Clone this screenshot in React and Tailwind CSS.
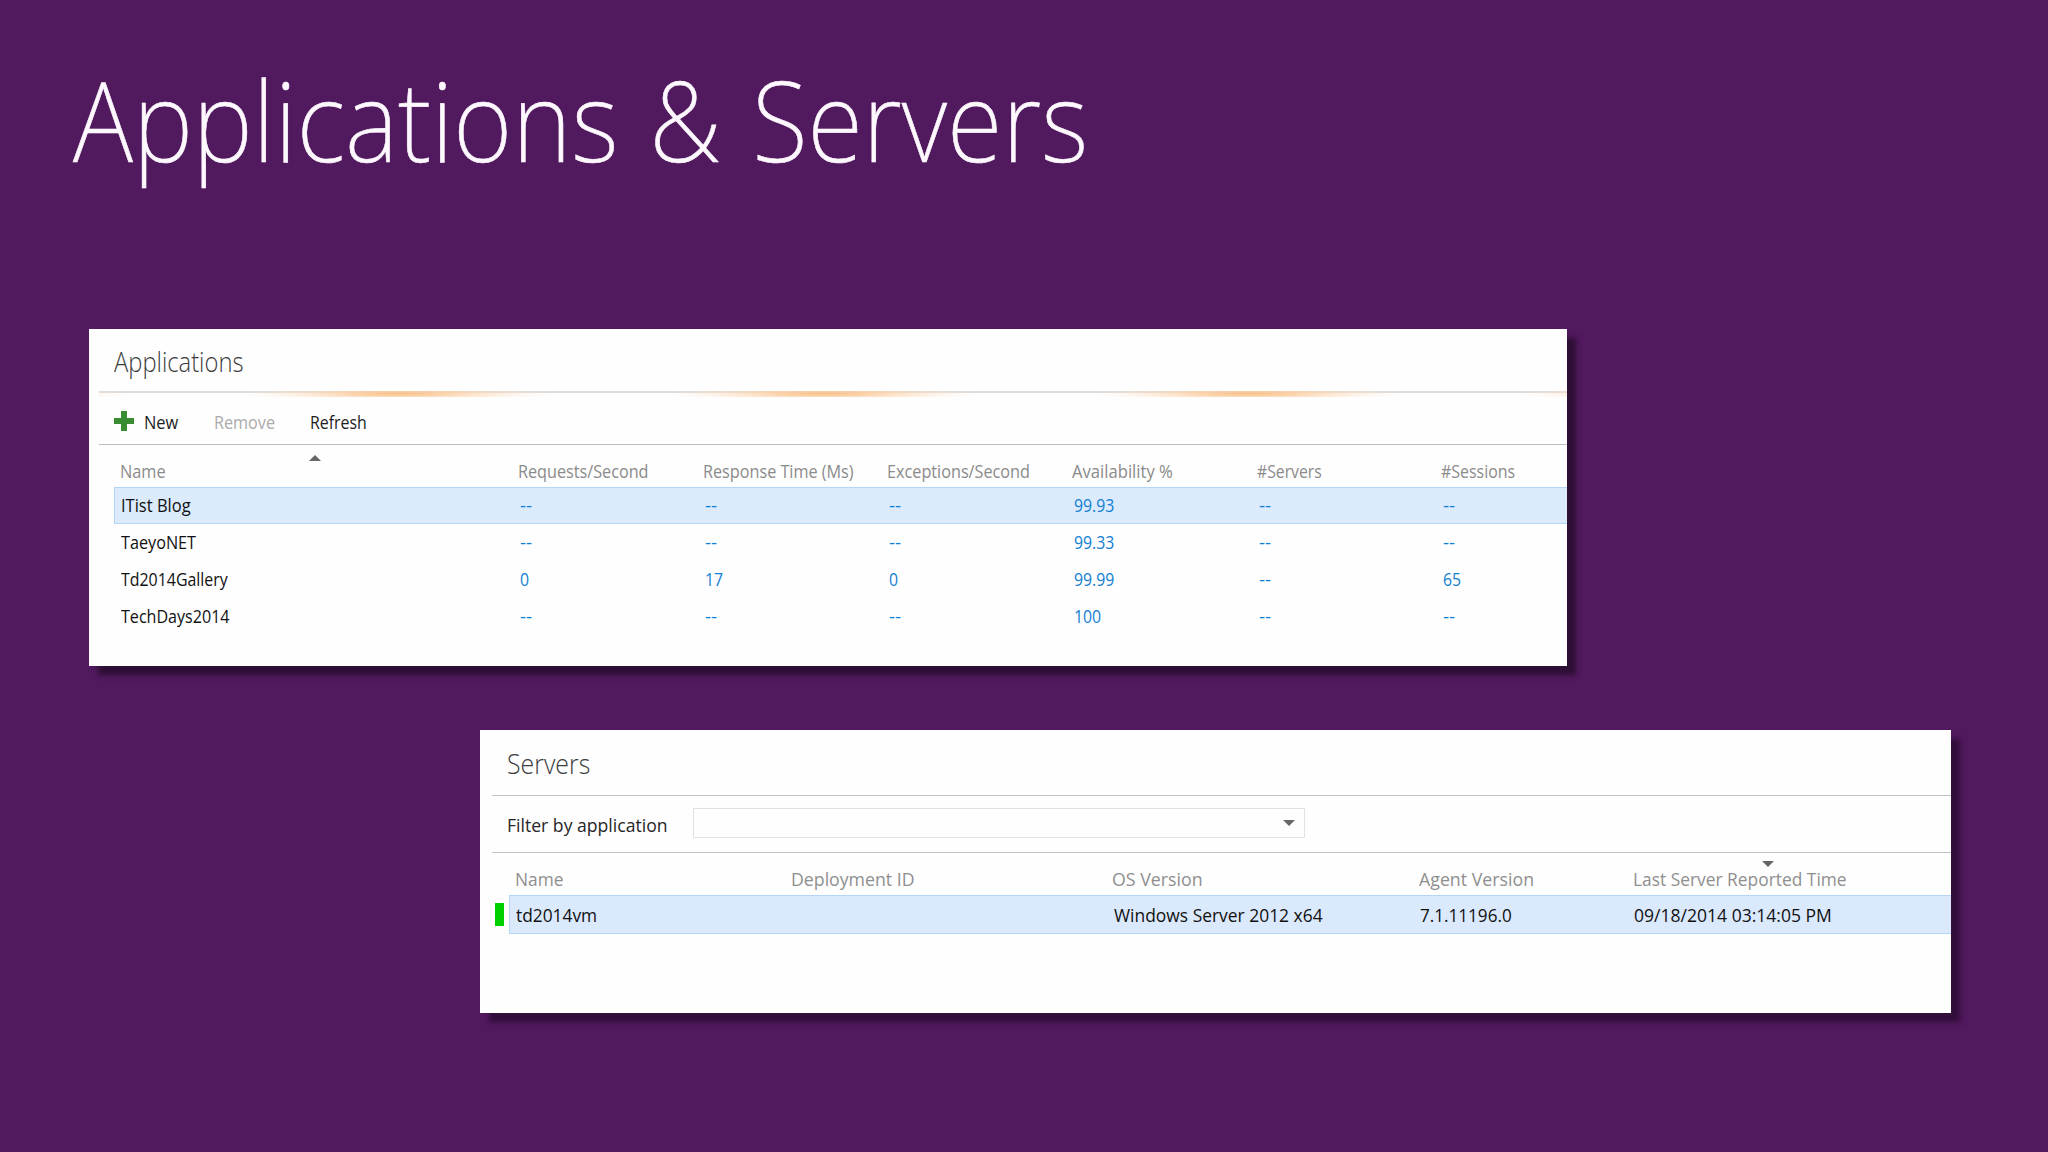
import React from 'react';

const appColumns = [
  { title: 'Name', fit: 'scale-x-[0.905]' },
  { title: 'Requests/Second', fit: 'scale-x-[0.9]' },
  { title: 'Response Time (Ms)', fit: 'scale-x-[0.9]' },
  { title: 'Exceptions/Second', fit: 'scale-x-[0.901]' },
  { title: 'Availability %', fit: 'scale-x-[0.924]' },
  { title: '#Servers', fit: 'scale-x-[0.875]' },
  { title: '#Sessions', fit: 'scale-x-[0.885]' },
];

const applications = [
  { name: 'ITist Blog', fit: 'scale-x-[0.917]', values: ['--', '--', '--', '99.93', '--', '--'], selected: true },
  { name: 'TaeyoNET', fit: 'scale-x-[0.9]', values: ['--', '--', '--', '99.33', '--', '--'] },
  { name: 'Td2014Gallery', fit: 'scale-x-[0.884]', values: ['0', '17', '0', '99.99', '--', '65'] },
  { name: 'TechDays2014', fit: 'scale-x-[0.893]', values: ['--', '--', '--', '100', '--', '--'] },
];

const serverColumns = [
  { title: 'Name', value: 'td2014vm', fit: 'scale-x-[0.913]', valueFit: 'scale-x-[0.912]' },
  { title: 'Deployment ID', value: '', fit: 'scale-x-[0.932]', valueFit: '' },
  { title: 'OS Version', value: 'Windows Server 2012 x64', fit: 'scale-x-[0.935]', valueFit: 'scale-x-[0.917]' },
  { title: 'Agent Version', value: '7.1.11196.0', fit: 'scale-x-[0.935]', valueFit: 'scale-x-[0.9]' },
  { title: 'Last Server Reported Time', value: '09/18/2014 03:14:05 PM', fit: 'scale-x-[0.914]', valueFit: 'scale-x-[0.923]' },
];

const Label = ({ fit = 'scale-x-[0.9]', className = '', children }) => (
  <span className={`inline-block origin-left whitespace-nowrap ${fit} ${className}`}>{children}</span>
);

const Triangle = ({ down, className = '' }) => (
  <svg width="12" height="6" viewBox="0 0 12 6" className={className}>
    <path d={down ? 'M0 0H12L6 6Z' : 'M0 6H12L6 0Z'} fill="#666666" />
  </svg>
);

// Loading strip under the applications title: repeating orange glows
const GlowStrip = () => (
  <svg width="1468" height="6" viewBox="0 0 1468 6" className="block">
    <defs>
      <radialGradient id="glow">
        <stop offset="0" stopColor="#f8c08a" />
        <stop offset="0.3" stopColor="#fbcfa4" stopOpacity="0.9" />
        <stop offset="1" stopColor="#fde6d0" stopOpacity="0" />
      </radialGradient>
    </defs>
    <rect width="1468" height="2" fill="#dedddd" />
    {[-126, 299, 724, 1150, 1576].map(cx => (
      <ellipse key={cx} cx={cx} cy="2.5" rx="155" ry="9" fill="url(#glow)" />
    ))}
  </svg>
);

const ApplicationsPanel = () => (
  <section className="ml-[89px] w-[1478px] h-[337px] bg-[#fefefe] pl-[10px] shadow-[9px_9px_5px_#2d0f35] text-[18px] leading-6">
    <header className="flex h-[62px] items-center pl-[15px] pt-[3px]">
      <h2 className="text-[27px] leading-8 font-light text-[#3c3c3c]">
        <Label fit="scale-x-[0.88]">Applications</Label>
      </h2>
    </header>
    <GlowStrip />
    <div className="flex h-[47px] items-center pl-[15px] pt-[2px] text-[#1c1c1c]">
      <svg width="20" height="20" viewBox="0 0 20 20" className="mb-px">
        <path d="M7 0H13V7H20V13H13V20H7V13H0V7H7Z" fill="#388d33" />
      </svg>
      <div className="ml-[10px] w-[70px]"><Label fit="scale-x-[0.912]">New</Label></div>
      <div className="w-[96px] text-[#ababab]"><Label>Remove</Label></div>
      <Label fit="scale-x-[0.883]">Refresh</Label>
    </div>
    <div className="h-px bg-[#bdbdbd]" />
    <div className="relative flex h-[42px] items-end pb-[4px] pl-[21px] text-[#8b8b8b]">
      <Triangle className="absolute left-[210px] top-[10px]" />
      <div className="grid grid-cols-[398px_repeat(6,184.7px)]">
        {appColumns.map(col => <Label key={col.title} fit={col.fit}>{col.title}</Label>)}
      </div>
    </div>
    <div className="ml-[15px]">
      {applications.map(app => (
        <div
          key={app.name}
          className={`flex h-[37px] items-center overflow-hidden border border-r-0 pb-px pl-[6px] ${app.selected ? 'border-[#b4d5f5] bg-[#dbebfc]' : 'border-transparent'}`}
        >
          <div className="grid grid-cols-[399px_repeat(6,184.7px)] text-[#1280d2]">
            <Label fit={app.fit} className="text-[#111111]">{app.name}</Label>
            {app.values.map((value, i) => (
              <Label key={i} fit={value === '--' ? 'scale-x-105' : 'scale-x-[0.88]'} className="font-medium">{value}</Label>
            ))}
          </div>
        </div>
      ))}
    </div>
  </section>
);

const ServersPanel = () => (
  <section className="ml-[480px] mt-16 w-[1471px] h-[283px] bg-[#fefefe] pl-3 shadow-[9px_9px_5px_#320e3b] text-[19px] leading-[26px]">
    <header className="flex h-[65px] items-center pl-[15px]">
      <h2 className="text-[28px] leading-8 font-light text-[#3c3c3c]">
        <Label fit="scale-x-[0.888]">Servers</Label>
      </h2>
    </header>
    <div className="h-px bg-[#c2c2c6]" />
    <div className="flex h-14 items-center pl-[15px] text-[#262626]">
      <div className="w-[186px] pt-[2px]"><Label fit="scale-x-[0.926]">Filter by application</Label></div>
      <div className="mb-[2px] flex h-[30px] w-[612px] items-center justify-end border border-[#e2e2e4] pr-[9px]">
        <Triangle down />
      </div>
    </div>
    <div className="h-px bg-[#c2c2c6]" />
    <div className="relative flex h-[42px] items-end pb-[3px] pl-[23px] text-[#8f8f8f]">
      <Triangle down className="absolute left-[1270px] top-[8px]" />
      <div className="grid grid-cols-[276px_321px_307px_214px_300px]">
        {serverColumns.map(col => <Label key={col.title} fit={col.fit}>{col.title}</Label>)}
      </div>
    </div>
    <div className="flex items-center">
      <div className="ml-[3px] mr-[5px] h-[23px] w-[9px] bg-[#00d000]" />
      <div className="flex h-[39px] flex-1 items-center border border-r-0 border-[#b4d5f5] bg-[#dbe9fd] pl-[6px] text-[#111111]">
        <div className="grid grid-cols-[276px_322px_306px_214px_300px]">
          {serverColumns.map(col => <Label key={col.title} fit={col.valueFit}>{col.value}</Label>)}
        </div>
      </div>
    </div>
  </section>
);

export default function App() {
  return (
    <main className="h-[1152px] w-[2048px] overflow-hidden bg-[#51195e] pt-[59px] font-['Open_Sans',sans-serif]">
      <h1 className="mb-[150px] ml-[73px] h-[120px] font-['Noto_Sans',sans-serif] text-[111px] leading-[120px] font-extralight text-[#fdf8fd] [-webkit-text-stroke:0.6px_#fdf8fd]">
        <Label fit="scale-x-[0.915]" className="[word-spacing:5px]">Applications &amp; Servers</Label>
      </h1>
      <ApplicationsPanel />
      <ServersPanel />
    </main>
  );
}
